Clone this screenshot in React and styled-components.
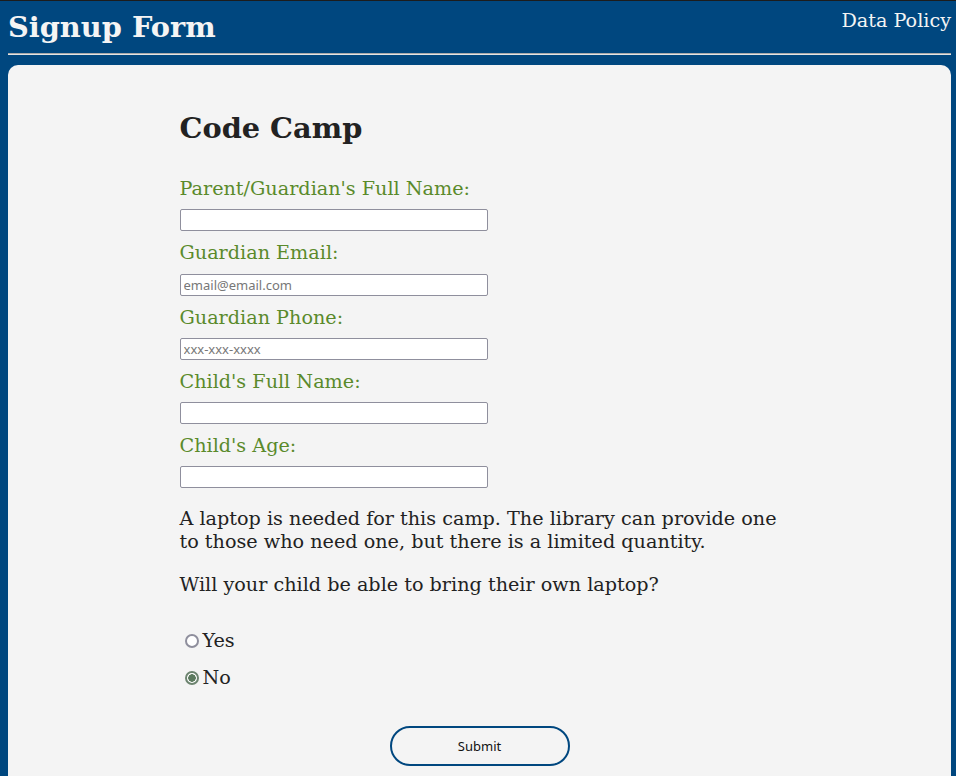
import React from "react";
import styled, { createGlobalStyle } from "styled-components";

const Global = createGlobalStyle`
  html, body { margin: 0; padding: 0; }
  body {
    background: #00477f;
    border-top: 1px solid #1c1c1c;
    font-family: "DejaVu Serif", serif;
    color: #222;
  }
`;

const Page = styled.div`
  padding: 0 5px 0 8px;
`;

const Header = styled.header`
  display: flex;
  justify-content: space-between;
  align-items: flex-start;
`;

const Title = styled.h1`
  margin: 9px 0 0;
  font-size: 28.8px;
  font-weight: bold;
  color: #f4f4f4;
  line-height: 34px;
`;

const NavLink = styled.a`
  margin-top: 9px;
  font-size: 19.2px;
  color: #f4f4f4;
  text-decoration: none;
  line-height: 22px;
`;

const Rule = styled.div`
  margin-top: 9px;
  border-top: 1px solid #a9a9a9;
  border-bottom: 1px solid #e4e4e4;
`;

const Card = styled.main`
  margin-top: 10px;
  background: #f4f4f4;
  border-radius: 10px 10px 0 0;
  padding: 46px 0 40px;
  min-height: 700px;
`;

const Content = styled.div`
  width: 600px;
  margin: 0 auto;
`;

const Heading = styled.h2`
  margin: 0 0 33px;
  font-size: 28.8px;
  font-weight: bold;
  line-height: 34px;
  color: #222;
`;

const Field = styled.div`
  display: flex;
  flex-direction: column;
  align-items: flex-start;
  margin-bottom: 11px;
`;

const Label = styled.label`
  font-size: 19.2px;
  color: #5a8a2b;
  line-height: 22.25px;
  margin-bottom: 9px;
`;

const Input = styled.input`
  box-sizing: border-box;
  width: 308px;
  height: 22px;
  margin: 0;
  padding: 1px 3px;
  border: 1px solid #8f8f9d;
  border-radius: 2px;
  background: #fff;
  font-family: "Noto Sans", sans-serif;
  font-size: 13px;
  &::placeholder { color: #777; }
`;

const Para = styled.p`
  margin: 19.2px 0;
  font-size: 19.2px;
  line-height: 23px;
  color: #222;
`;

const Options = styled.div`
  margin-top: 32px;
  display: flex;
  flex-direction: column;
  gap: 12px;
`;

const Option = styled.label`
  display: flex;
  align-items: center;
  font-size: 19.2px;
  color: #222;
  line-height: 25px;
`;

const Radio = styled.input`
  appearance: none;
  box-sizing: border-box;
  margin: 1px 4px 0 5px;
  width: 14px;
  height: 14px;
  border: 2px solid #8f8f9d;
  border-radius: 50%;
  background: #fff;
  &:checked {
    border-color: #6d8470;
    background: radial-gradient(circle, #5c7a5f 0 3.5px, #fff 4px);
  }
`;

const SubmitRow = styled.div`
  display: flex;
  justify-content: center;
  margin-top: 36px;
`;

const SubmitButton = styled.button`
  box-sizing: border-box;
  width: 180px;
  height: 40px;
  border: 2px solid #00477f;
  border-radius: 20px;
  background: transparent;
  font-family: "Noto Sans", sans-serif;
  font-size: 13px;
  color: #111;
`;

const fields = [
  { id: "guardian", label: "Parent/Guardian's Full Name:", placeholder: "" },
  { id: "email", label: "Guardian Email:", placeholder: "email@email.com" },
  { id: "phone", label: "Guardian Phone:", placeholder: "xxx-xxx-xxxx" },
  { id: "child", label: "Child's Full Name:", placeholder: "" },
  { id: "age", label: "Child's Age:", placeholder: "" },
];

export default function App() {
  return (
    <>
      <Global />
      <Page>
        <Header>
          <Title>Signup Form</Title>
          <NavLink href="#">Data Policy</NavLink>
        </Header>
        <Rule />
        <Card>
          <Content>
            <Heading>Code Camp</Heading>
            {fields.map((f) => (
              <Field key={f.id}>
                <Label htmlFor={f.id}>{f.label}</Label>
                <Input id={f.id} placeholder={f.placeholder} />
              </Field>
            ))}
            <Para>
              A laptop is needed for this camp. The library can provide one to
              those who need one, but there is a limited quantity.
            </Para>
            <Para>Will your child be able to bring their own laptop?</Para>
            <Options>
              <Option>
                <Radio type="radio" name="laptop" value="yes" />
                Yes
              </Option>
              <Option>
                <Radio type="radio" name="laptop" value="no" defaultChecked />
                No
              </Option>
            </Options>
          </Content>
          <SubmitRow>
            <SubmitButton type="button">Submit</SubmitButton>
          </SubmitRow>
        </Card>
      </Page>
    </>
  );
}
